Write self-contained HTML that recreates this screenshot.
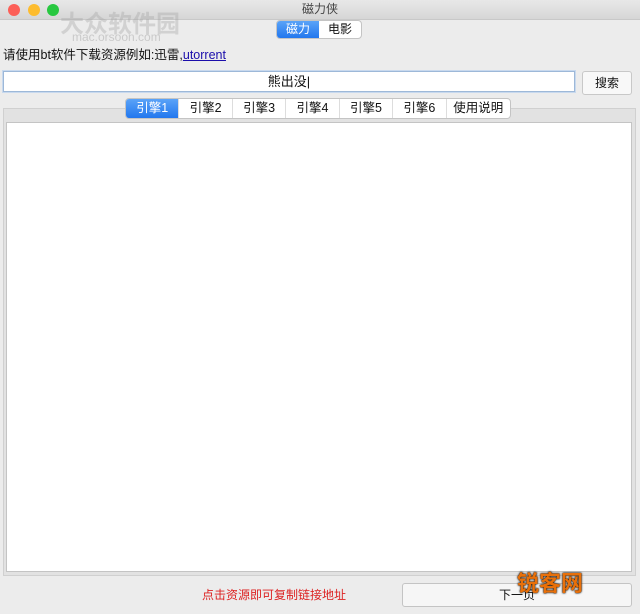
<!DOCTYPE html><html><head><meta charset="utf-8"><style>
body{margin:0;width:640px;height:614px;background:#ececec;font-family:"Liberation Sans","Noto Sans CJK SC",sans-serif;position:relative;overflow:hidden;font-size:12px;color:#111}
.a{position:absolute}
.t{top:0;left:0;width:640px;height:19px;background:linear-gradient(#e8e8e8,#d6d6d6);border-bottom:1px solid #c8c8c8;text-align:center;line-height:19px;font-size:12px;color:#444}
.d{width:12px;height:12px;border-radius:50%;top:4px}
.seg{top:20px;left:276px;width:84px;height:17px;border:1px solid #c4c4c4;border-radius:4px;background:#fff;display:flex;overflow:hidden;font-size:12px;line-height:17px}
.seg span{width:42px;text-align:center}
.on{background:linear-gradient(#5aa3f8,#2277ee);color:#fff}
.tabs{top:98px;left:125px;width:384px;height:19px;border:1px solid #c4c4c4;border-radius:4px;background:#fff;display:flex;overflow:hidden;line-height:19px;font-size:12.5px}
.tabs span{width:53px;text-align:center;border-right:1px solid #ddd}
</style></head><body>
<div class="a t">磁力侠</div>
<div class="a d" style="left:8px;background:#fc5f57"></div>
<div class="a d" style="left:28px;background:#fdbc2e"></div>
<div class="a d" style="left:47px;background:#28c840"></div>
<div class="a" style="left:60px;top:4px;font-size:24px;color:rgba(160,160,160,.35);font-weight:bold">大众软件园</div>
<div class="a" style="left:72px;top:30px;font-size:12px;color:rgba(150,150,150,.4)">mac.orsoon.com</div>
<div class="a seg"><span class="on">磁力</span><span>电影</span></div>
<div class="a" style="left:3px;top:44px;font-size:12.5px">请使用bt软件下载资源例如:迅雷,<span style="color:#1a0dab;text-decoration:underline">utorrent</span></div>
<div class="a" style="left:3px;top:71px;width:570px;height:19px;background:#fff;border:1px solid #9db8d8;box-shadow:0 0 0 1px #c8d9ee;text-align:center;line-height:19px;font-size:13px">熊出没|</div>
<div class="a" style="left:582px;top:71px;width:48px;height:22px;background:#f8f8f8;border:1px solid #c8c8c8;border-radius:3px;text-align:center;line-height:22px">搜索</div>
<div class="a" style="left:3px;top:108px;width:631px;height:466px;background:#e2e2e2;border:1px solid #d0d0d0"></div>
<div class="a" style="left:6px;top:122px;width:624px;height:448px;background:#fff;border:1px solid #c4c4c4"></div>
<div class="a tabs"><span class="on">引擎1</span><span>引擎2</span><span>引擎3</span><span>引擎4</span><span>引擎5</span><span>引擎6</span><span style="border:0;width:64px">使用说明</span></div>
<div class="a" style="left:202px;top:586px;color:#d22;font-size:12px">点击资源即可复制链接地址</div>
<div class="a" style="left:402px;top:583px;width:228px;height:22px;background:#f6f6f6;border:1px solid #c4c4c4;border-radius:3px;text-align:center;line-height:22px">下一页</div>
<div class="a" style="left:517px;top:566px;font-size:22px;font-weight:bold;color:#e8700a;text-shadow:0 0 2px #000,0 0 1px #000">锐客网</div>
</body></html>
